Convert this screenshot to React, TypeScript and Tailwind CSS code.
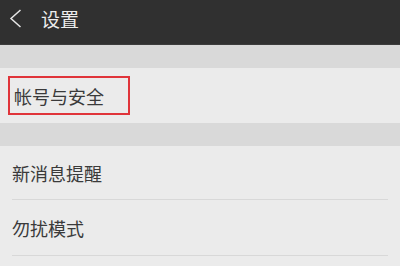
import React from 'react';

const font = { fontFamily: '"Noto Sans CJK SC", "Noto Sans", sans-serif' };

export default function App() {
  return (
    <div className="w-[400px] h-[266px] overflow-hidden bg-[#ebebeb]" style={font}>
      {/* Header */}
      <div className="h-[45px] bg-[#303030] border-b border-[#3c3c3c] flex items-center pb-[7px]">
        <svg className="ml-[9px]" width="13" height="19" viewBox="0 0 13 19" fill="none">
          <path d="M11.5 1 L2 9.5 L11.5 18" stroke="#e6e6e6" strokeWidth="1.5" />
        </svg>
        <span className="ml-[19px] text-[19px] leading-none text-[#ececec]">设置</span>
      </div>

      <div className="h-[23px] bg-[#d9d9d9]" />

      {/* Account row */}
      <div className="h-[55px] bg-[#ebebeb] flex items-center px-[8px]">
        <div className="h-[39px] w-[122px] border-2 border-[#e0343a] flex items-center pl-[4px]">
          <span className="text-[18px] leading-none text-[#3a3a3a]">帐号与安全</span>
        </div>
      </div>

      <div className="h-[23px] bg-[#d9d9d9]" />

      <div className="bg-[#ebebeb]">
        <div className="h-[54px] mx-[12px] border-b border-[#d8d8d8] flex items-center">
          <span className="text-[18px] leading-none text-[#3a3a3a]">新消息提醒</span>
        </div>
        <div className="h-[56px] mx-[12px] border-b border-[#d8d8d8] flex items-center">
          <span className="text-[18px] leading-none text-[#3a3a3a]">勿扰模式</span>
        </div>
      </div>
    </div>
  );
}
